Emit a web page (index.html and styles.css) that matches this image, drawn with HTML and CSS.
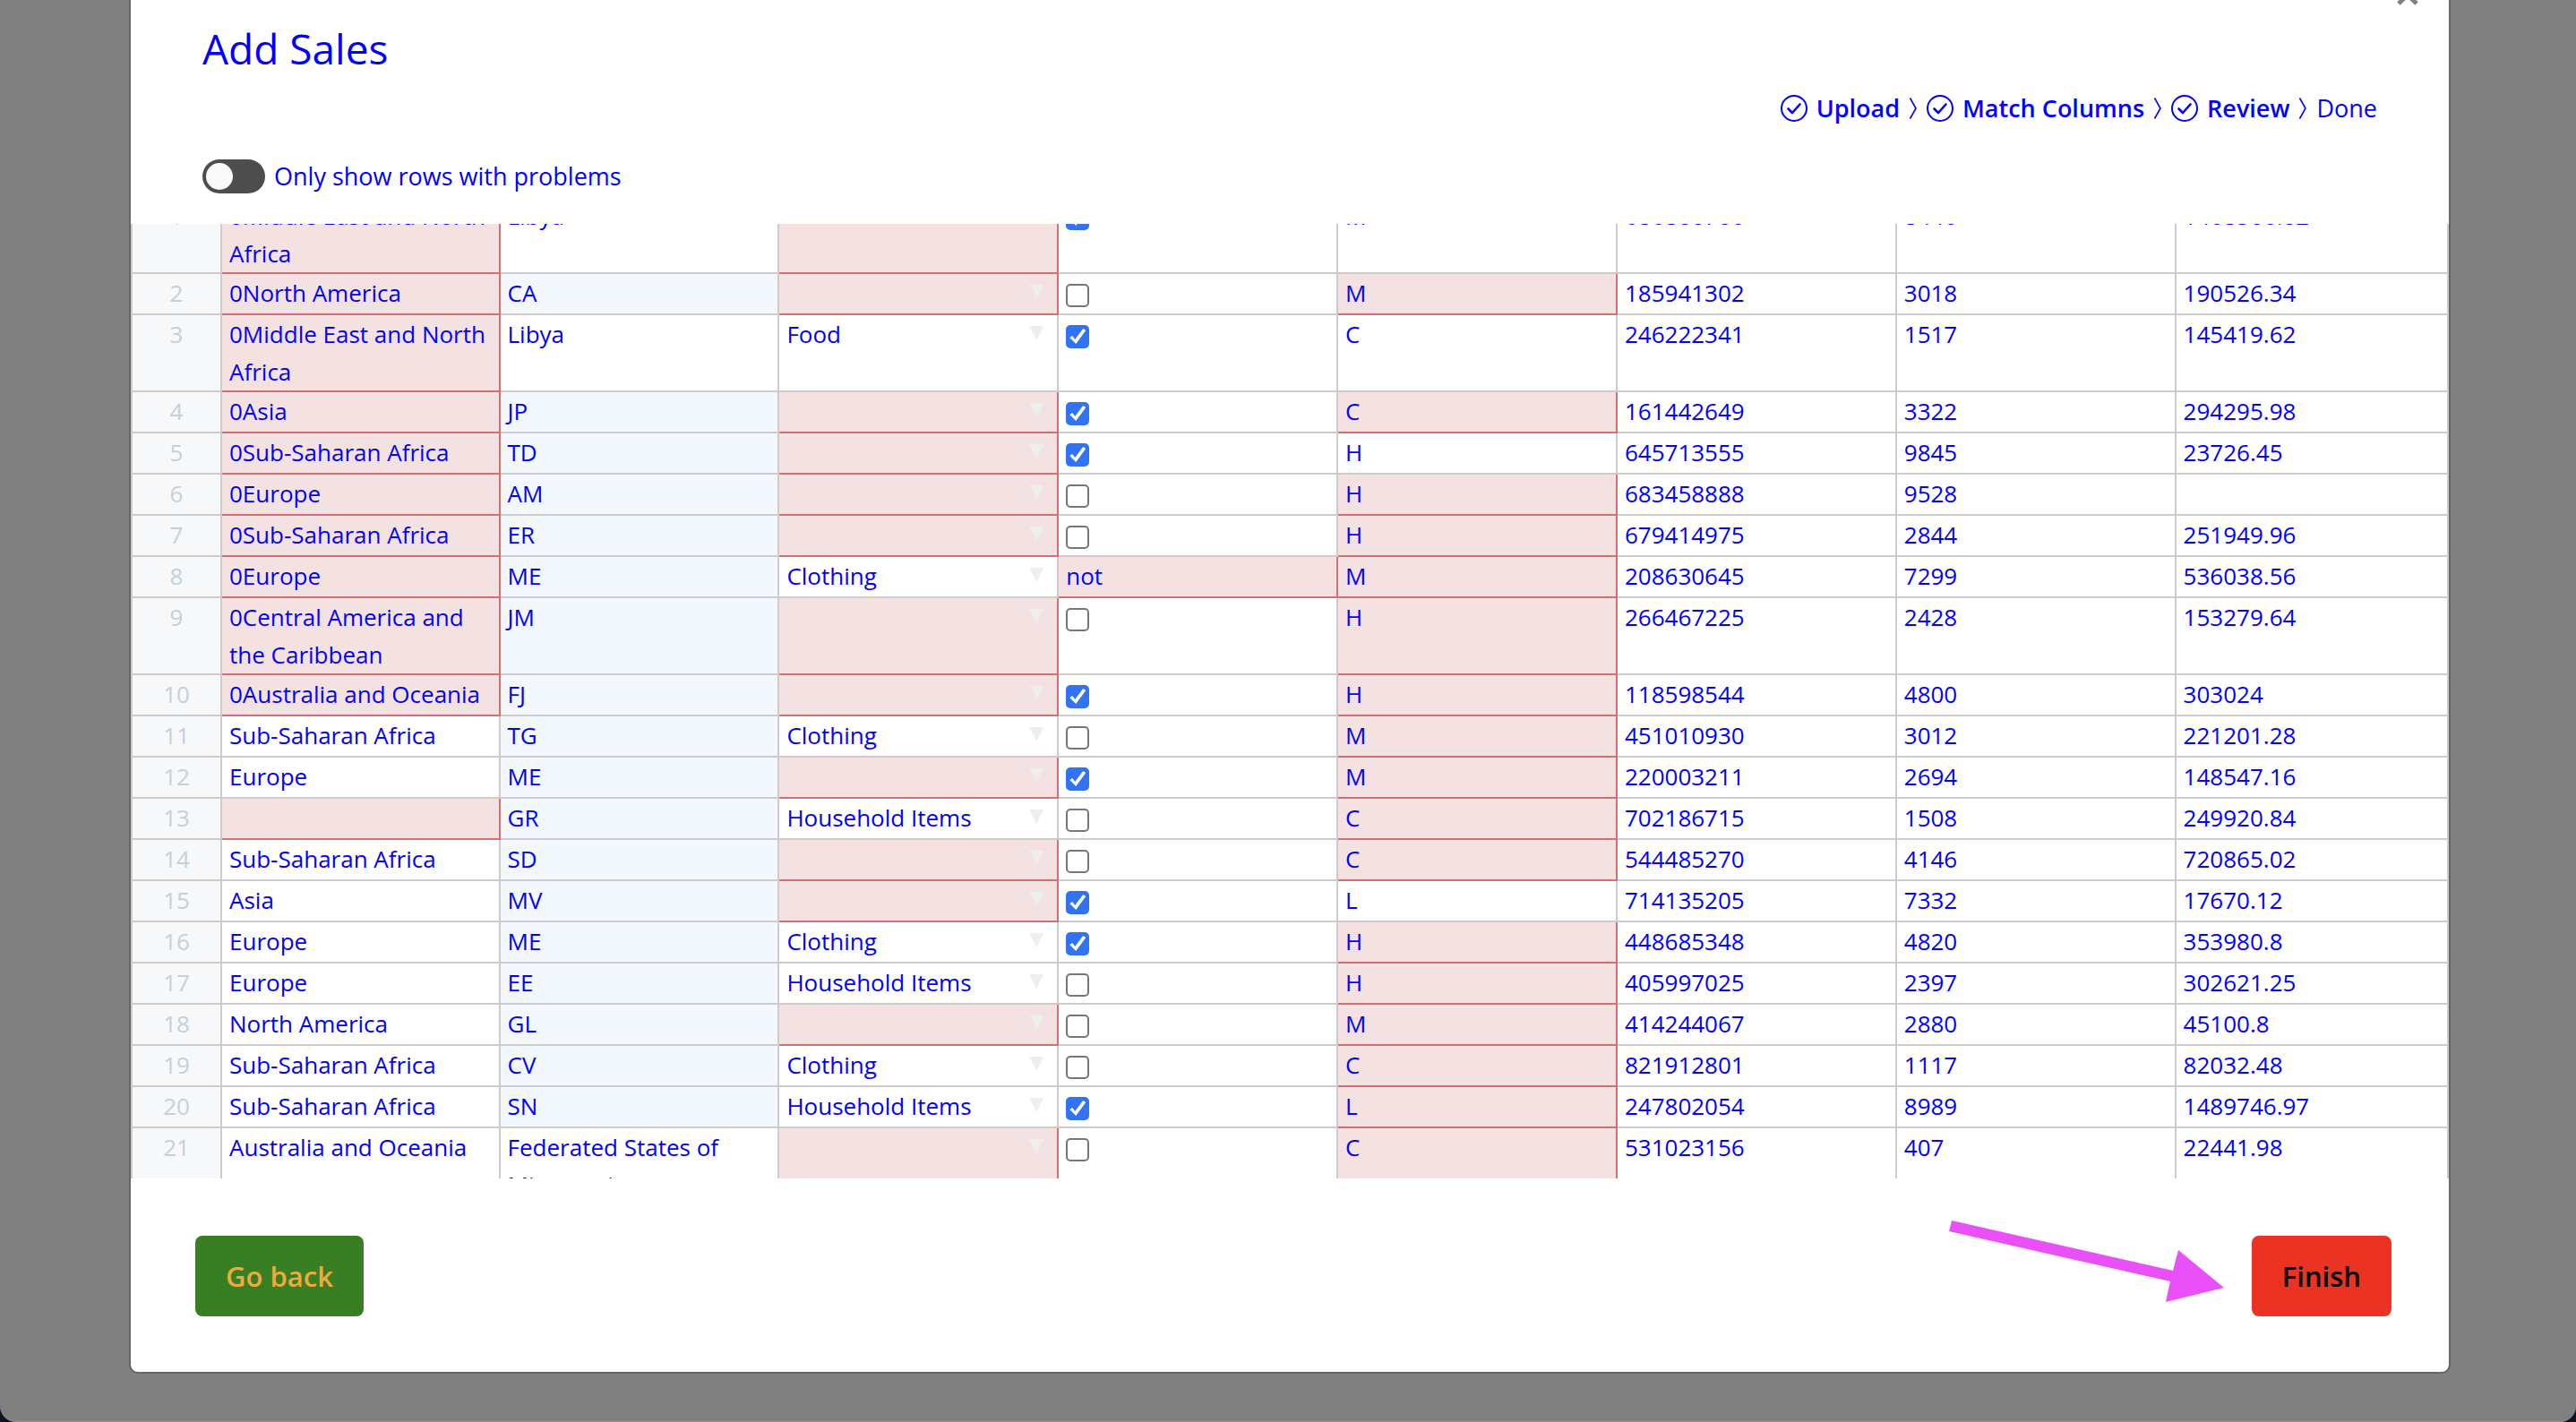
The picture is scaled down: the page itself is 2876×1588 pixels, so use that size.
FILE: index.html
```
<!DOCTYPE html>
<html lang="en">
<head>
<meta charset="utf-8">
<title>Add Sales</title>
<link rel="stylesheet" href="styles.css">
</head>
<body>
<svg class="sprite" aria-hidden="true">
  <symbol id="check-circle" viewBox="0 0 30 30">
    <circle cx="15" cy="15" r="14" fill="none" stroke="currentColor" stroke-width="2"/>
    <path d="M8.5 15.5 L13 20 L21.5 10.5" fill="none" stroke="currentColor" stroke-width="2.6" stroke-linecap="round" stroke-linejoin="round"/>
  </symbol>
  <symbol id="chevron" viewBox="0 0 10 26">
    <path d="M1.5 1.5 L8 13 L1.5 24.5" fill="none" stroke="currentColor" stroke-width="1.6"/>
  </symbol>
</svg>
<div class="overlay">
  <main class="modal">
    <button class="close" type="button" aria-label="Close">
      <svg viewBox="0 0 24 24" width="24" height="24"><path d="M2 2 L22 22 M22 2 L2 22" stroke="currentColor" stroke-width="5"/></svg>
    </button>
    <header class="header">
      <h1 class="title">Add Sales</h1>
      <ol class="steps">
        <li class="step step-done"><svg class="step-icon"><use href="#check-circle"/></svg>Upload</li>
        <li class="step step-done"><svg class="chevron"><use href="#chevron"/></svg><svg class="step-icon"><use href="#check-circle"/></svg>Match Columns</li>
        <li class="step step-done"><svg class="chevron"><use href="#chevron"/></svg><svg class="step-icon"><use href="#check-circle"/></svg>Review</li>
        <li class="step"><svg class="chevron"><use href="#chevron"/></svg>Done</li>
      </ol>
      <label class="filter"><input class="switch" type="checkbox">Only show rows with problems</label>
    </header>
    <section class="grid">
      <table class="table">
        <colgroup><col class="col-number"><col class="col-region"><col class="col-data" span="6"><col></colgroup>
        <tbody>
          <tr><th>1</th><td class="bad">0Middle East and North Africa</td><td>Libya</td><td class="bad"><div class="pick"><select aria-label="Item type"><option></option></select></div></td><td><input class="box" type="checkbox" aria-label="Online" checked></td><td>M</td><td>686800706</td><td>8446</td><td>1468506.02</td></tr>
          <tr><th>2</th><td class="bad">0North America</td><td class="code">CA</td><td class="bad"><div class="pick"><select aria-label="Item type"><option></option></select></div></td><td><input class="box" type="checkbox" aria-label="Online"></td><td class="bad">M</td><td>185941302</td><td>3018</td><td>190526.34</td></tr>
          <tr><th>3</th><td class="bad">0Middle East and North Africa</td><td>Libya</td><td><div class="pick"><select aria-label="Item type"><option>Food</option></select></div></td><td><input class="box" type="checkbox" aria-label="Online" checked></td><td>C</td><td>246222341</td><td>1517</td><td>145419.62</td></tr>
          <tr><th>4</th><td class="bad">0Asia</td><td class="code">JP</td><td class="bad"><div class="pick"><select aria-label="Item type"><option></option></select></div></td><td><input class="box" type="checkbox" aria-label="Online" checked></td><td class="bad">C</td><td>161442649</td><td>3322</td><td>294295.98</td></tr>
          <tr><th>5</th><td class="bad">0Sub-Saharan Africa</td><td class="code">TD</td><td class="bad"><div class="pick"><select aria-label="Item type"><option></option></select></div></td><td><input class="box" type="checkbox" aria-label="Online" checked></td><td>H</td><td>645713555</td><td>9845</td><td>23726.45</td></tr>
          <tr><th>6</th><td class="bad">0Europe</td><td class="code">AM</td><td class="bad"><div class="pick"><select aria-label="Item type"><option></option></select></div></td><td><input class="box" type="checkbox" aria-label="Online"></td><td class="bad">H</td><td>683458888</td><td>9528</td><td></td></tr>
          <tr><th>7</th><td class="bad">0Sub-Saharan Africa</td><td class="code">ER</td><td class="bad"><div class="pick"><select aria-label="Item type"><option></option></select></div></td><td><input class="box" type="checkbox" aria-label="Online"></td><td class="bad">H</td><td>679414975</td><td>2844</td><td>251949.96</td></tr>
          <tr><th>8</th><td class="bad">0Europe</td><td class="code">ME</td><td><div class="pick"><select aria-label="Item type"><option>Clothing</option></select></div></td><td class="bad">not</td><td class="bad">M</td><td>208630645</td><td>7299</td><td>536038.56</td></tr>
          <tr><th>9</th><td class="bad">0Central America and the Caribbean</td><td class="code">JM</td><td class="bad"><div class="pick"><select aria-label="Item type"><option></option></select></div></td><td><input class="box" type="checkbox" aria-label="Online"></td><td class="bad">H</td><td>266467225</td><td>2428</td><td>153279.64</td></tr>
          <tr><th>10</th><td class="bad">0Australia and Oceania</td><td class="code">FJ</td><td class="bad"><div class="pick"><select aria-label="Item type"><option></option></select></div></td><td><input class="box" type="checkbox" aria-label="Online" checked></td><td class="bad">H</td><td>118598544</td><td>4800</td><td>303024</td></tr>
          <tr><th>11</th><td>Sub-Saharan Africa</td><td class="code">TG</td><td><div class="pick"><select aria-label="Item type"><option>Clothing</option></select></div></td><td><input class="box" type="checkbox" aria-label="Online"></td><td class="bad">M</td><td>451010930</td><td>3012</td><td>221201.28</td></tr>
          <tr><th>12</th><td>Europe</td><td class="code">ME</td><td class="bad"><div class="pick"><select aria-label="Item type"><option></option></select></div></td><td><input class="box" type="checkbox" aria-label="Online" checked></td><td class="bad">M</td><td>220003211</td><td>2694</td><td>148547.16</td></tr>
          <tr><th>13</th><td class="bad"></td><td class="code">GR</td><td><div class="pick"><select aria-label="Item type"><option>Household Items</option></select></div></td><td><input class="box" type="checkbox" aria-label="Online"></td><td class="bad">C</td><td>702186715</td><td>1508</td><td>249920.84</td></tr>
          <tr><th>14</th><td>Sub-Saharan Africa</td><td class="code">SD</td><td class="bad"><div class="pick"><select aria-label="Item type"><option></option></select></div></td><td><input class="box" type="checkbox" aria-label="Online"></td><td class="bad">C</td><td>544485270</td><td>4146</td><td>720865.02</td></tr>
          <tr><th>15</th><td>Asia</td><td class="code">MV</td><td class="bad"><div class="pick"><select aria-label="Item type"><option></option></select></div></td><td><input class="box" type="checkbox" aria-label="Online" checked></td><td>L</td><td>714135205</td><td>7332</td><td>17670.12</td></tr>
          <tr><th>16</th><td>Europe</td><td class="code">ME</td><td><div class="pick"><select aria-label="Item type"><option>Clothing</option></select></div></td><td><input class="box" type="checkbox" aria-label="Online" checked></td><td class="bad">H</td><td>448685348</td><td>4820</td><td>353980.8</td></tr>
          <tr><th>17</th><td>Europe</td><td class="code">EE</td><td><div class="pick"><select aria-label="Item type"><option>Household Items</option></select></div></td><td><input class="box" type="checkbox" aria-label="Online"></td><td class="bad">H</td><td>405997025</td><td>2397</td><td>302621.25</td></tr>
          <tr><th>18</th><td>North America</td><td class="code">GL</td><td class="bad"><div class="pick"><select aria-label="Item type"><option></option></select></div></td><td><input class="box" type="checkbox" aria-label="Online"></td><td class="bad">M</td><td>414244067</td><td>2880</td><td>45100.8</td></tr>
          <tr><th>19</th><td>Sub-Saharan Africa</td><td class="code">CV</td><td><div class="pick"><select aria-label="Item type"><option>Clothing</option></select></div></td><td><input class="box" type="checkbox" aria-label="Online"></td><td class="bad">C</td><td>821912801</td><td>1117</td><td>82032.48</td></tr>
          <tr><th>20</th><td>Sub-Saharan Africa</td><td class="code">SN</td><td><div class="pick"><select aria-label="Item type"><option>Household Items</option></select></div></td><td><input class="box" type="checkbox" aria-label="Online" checked></td><td class="bad">L</td><td>247802054</td><td>8989</td><td>1489746.97</td></tr>
          <tr><th>21</th><td>Australia and Oceania</td><td>Federated States of Micronesia</td><td class="bad"><div class="pick"><select aria-label="Item type"><option></option></select></div></td><td><input class="box" type="checkbox" aria-label="Online"></td><td class="bad">C</td><td>531023156</td><td>407</td><td>22441.98</td></tr>
        </tbody>
      </table>
    </section>
    <footer class="footer">
      <button class="button button-back" type="button">Go back</button>
      <svg class="arrow" viewBox="0 0 308 92" aria-hidden="true"><path d="M3 0 L250 56 L256 33 L307 75 L242 91 L247 68 L0 12 Z" fill="#ea50f7"/></svg>
      <button class="button button-finish" type="button">Finish</button>
    </footer>
  </main>
</div>
</body>
</html>
```
FILE: styles.css
```
* {
  box-sizing: border-box;
}

body {
  margin: 0;
  background: #0d1520;
  color: #0000ff;
  font-family: "Open Sans", "Noto Sans", sans-serif;
  font-size: 26px;
}

button,
select {
  font: inherit;
  color: inherit;
  border: 0;
}

.sprite {
  position: absolute;
  width: 0;
  height: 0;
}

.overlay {
  height: 100vh;
  padding: 0 142px 56px 146px;
  background: #808080;
  border-bottom: 1px solid #999;
  border-radius: 0 0 18px 18px;
  overflow: hidden;
}

.modal {
  position: relative;
  display: flex;
  flex-direction: column;
  height: calc(100vh - 56px);
  background: #fff;
  border-radius: 0 0 8px 8px;
  box-shadow: 0 0 0 2px #666;
}

.close {
  position: absolute;
  top: -18px;
  right: 34px;
  display: flex;
  padding: 0;
  background: none;
  color: #808080;
}

.header {
  display: flex;
  flex-direction: column;
  align-items: flex-start;
  padding: 24px 80px 34px;
}

.title {
  margin: 0;
  font-size: 46px;
  line-height: 60px;
  font-weight: 400;
}

.steps {
  display: flex;
  align-self: flex-end;
  gap: 10px;
  margin: 19px 0 39px;
  padding: 0;
  list-style: none;
  font-size: 27px;
  line-height: 36px;
}

.step {
  display: flex;
  align-items: center;
  gap: 10px;
}

.step-done {
  font-weight: 600;
}

.step-icon {
  width: 30px;
  height: 30px;
}

.chevron {
  width: 10px;
  height: 26px;
}

.filter {
  display: flex;
  align-items: center;
  gap: 10px;
  font-size: 27px;
  line-height: 38px;
}

.switch {
  appearance: none;
  display: flex;
  width: 70px;
  height: 38px;
  margin: 0;
  padding: 4px;
  border-radius: 19px;
  background: #4d4d4d;
}

.switch::before {
  content: "";
  width: 30px;
  height: 30px;
  border-radius: 50%;
  background: #fafafa;
}

.switch:checked {
  justify-content: flex-end;
}

.grid {
  flex: 1;
  min-height: 0;
  overflow: hidden;
}

/* The list is scrolled a little way into its first row. */
.table {
  width: 100%;
  margin-top: -30px;
  table-layout: fixed;
  border-spacing: 0;
  line-height: 42px;
}

.col-number {
  width: 102px;
}

.col-region {
  width: 12%;
}

.col-data {
  width: 12.05%;
}

.table th,
.table td {
  height: 46px;
  padding: 0 8px;
  border: solid #ccc;
  border-width: 0 2px 2px 0;
  text-align: left;
  vertical-align: top;
}

.table th {
  border-left-width: 2px;
  background: #f7f8fa;
  color: #c4d0d9;
  font-weight: 400;
  text-align: center;
}

.table .code {
  background: #f2f8fe;
}

.table .bad {
  background: #f4e2e2;
  border-color: #d37075;
}

.pick {
  display: flex;
  align-items: flex-start;
}

.pick::after {
  content: "";
  width: 16px;
  height: 16px;
  margin: 12px 7px 0 0;
  background: #eee;
  clip-path: polygon(0 0, 100% 0, 50% 100%);
}

.pick select {
  appearance: none;
  flex: 1;
  min-width: 0;
  height: 42px;
  padding: 0;
  background: none;
}

.box {
  appearance: none;
  display: block;
  width: 26px;
  height: 26px;
  margin: 11px 0 0;
  border: 2px solid #767676;
  border-radius: 5px;
  background: #fff;
}

.box:checked {
  border: 0;
  background: #3273f6;
}

.box:checked::before {
  content: "";
  display: block;
  width: 26px;
  height: 26px;
  background: #fff;
  clip-path: polygon(4px 14px, 7px 12px, 10px 16px, 19px 4px, 22px 6px, 11px 21px);
}

.footer {
  position: relative;
  display: flex;
  justify-content: space-between;
  padding: 64px 64px 62px 72px;
}

.button {
  height: 90px;
  padding: 0 34px;
  border-radius: 8px;
  font-size: 31px;
  font-weight: 600;
}

.button-back {
  background: #387e22;
  color: #f2a93b;
}

.button-finish {
  background: #ea3323;
  color: #000;
}

.arrow {
  position: absolute;
  top: 47px;
  right: 250px;
  width: 308px;
  height: 92px;
}
```
